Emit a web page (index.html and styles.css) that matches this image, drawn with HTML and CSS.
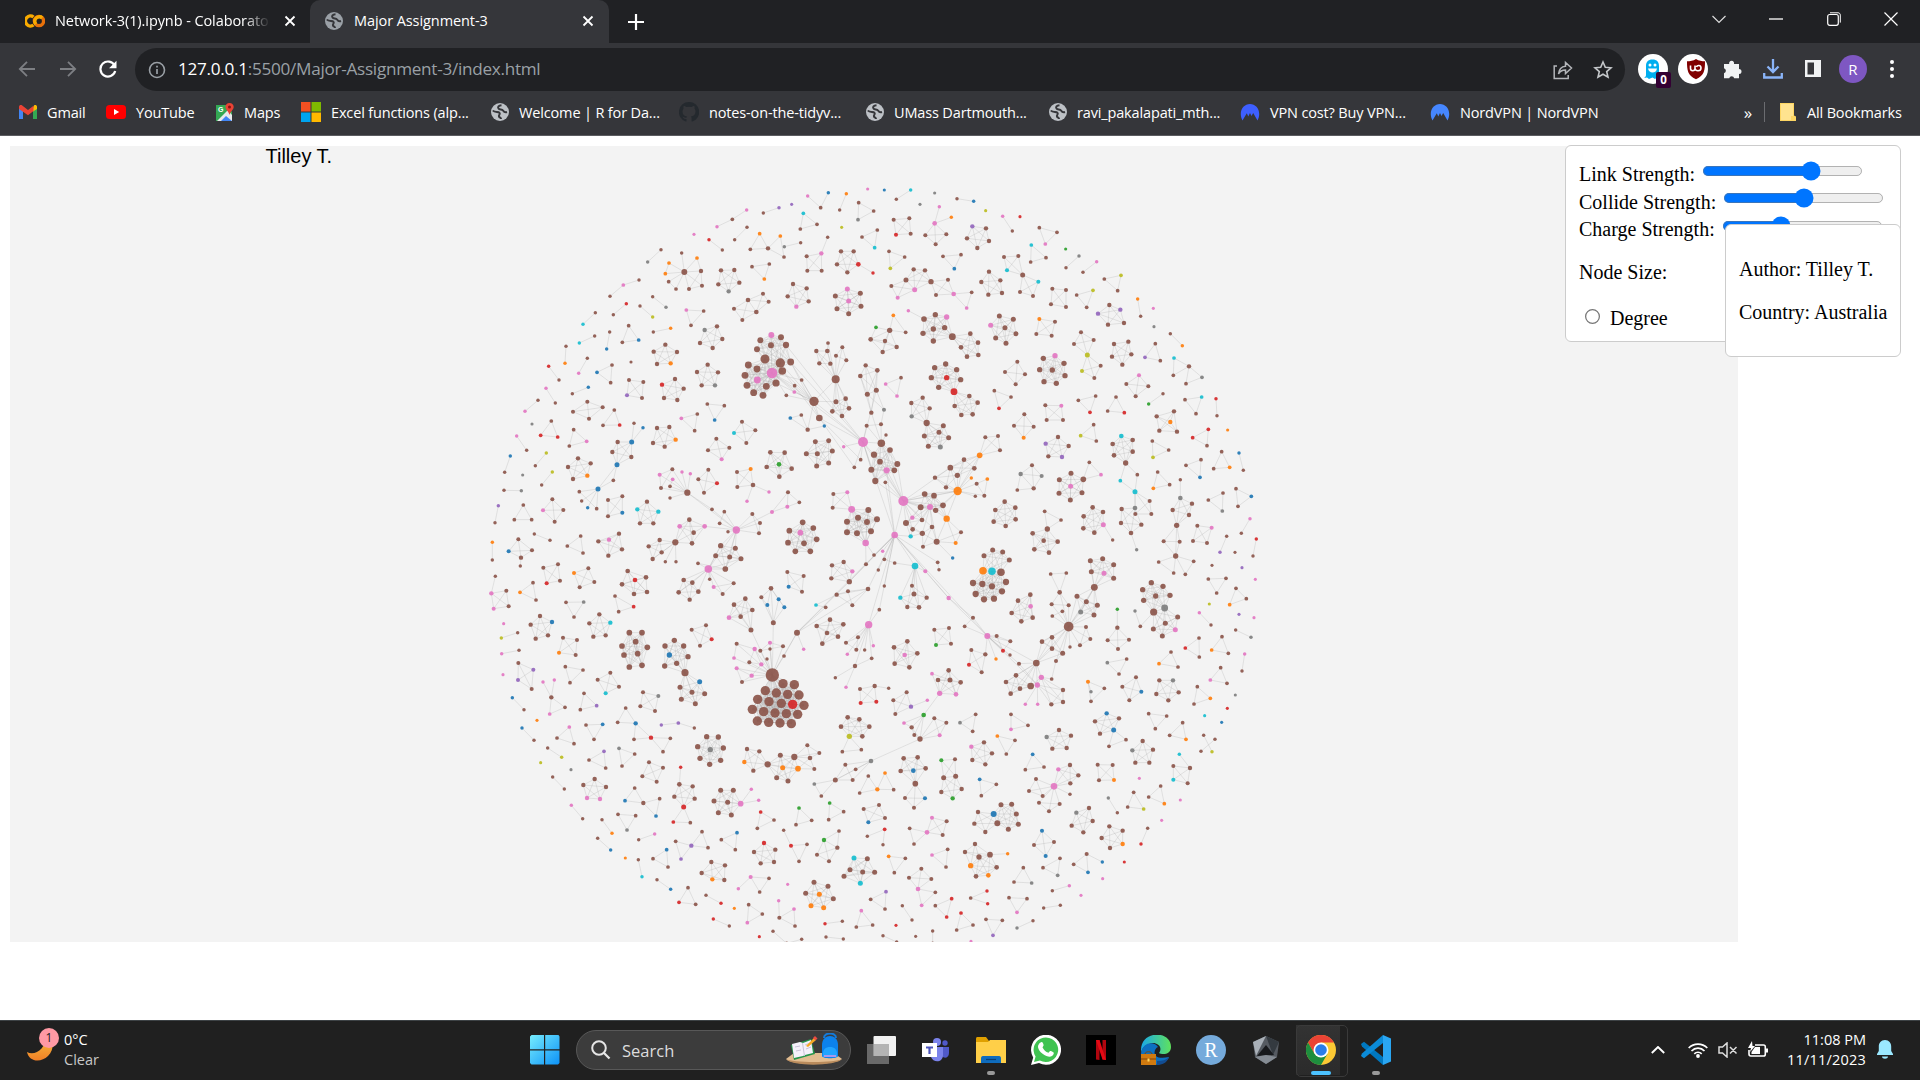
FILE: index.html
```html
<!DOCTYPE html>
<html lang="en">
<head>
<meta charset="utf-8">
<title>Major Assignment-3</title>
<link rel="stylesheet" href="styles.css">
</head>
<body>
<svg class="defs" width="0" height="0">
  <symbol id="globe" viewBox="0 0 18 18"><circle cx="9" cy="9" r="9" fill="currentColor"/><path d="M10.500 2.200C7.500 2.500 6.500 4 7.500 5.500s3.500.5 4.500 2 2.500 2 4 1.500M1.800 7.500c2 2.500 5.500.8 6.700 2.300s-1.200 2.200-.5 3.700 2.200.7 2 2.500" fill="none" stroke="#35363a" stroke-width="2"/></symbol>
  <symbol id="x" viewBox="0 0 12 12"><path d="M1.500 1.500l9 9M10.500 1.500l-9 9" stroke="currentColor" stroke-width="1.800"/></symbol>
  <symbol id="nord" viewBox="0 0 20 18"><path d="M2.500 17.500C-2 9 3 1 10 1s12 8 7.500 16.500L13.200 10l-1.700 3L10 10l-1.700 3.500-1.500-3.200z" fill="currentColor"/></symbol>
</svg>

<header class="browser">
  <div class="tabs">
    <div class="tab back-tab">
      <svg width="20" height="14" viewBox="0 0 20 14"><g fill="none" stroke-width="3.400"><path d="M8.500 3A5 5 0 1 0 8.500 11" stroke="#f9ab00"/><circle cx="14" cy="7" r="4.600" stroke="#e8710a"/><path d="M10.700 10.200A4.600 4.600 0 0 1 17.200 3.800" stroke="#f9ab00"/></g></svg>
      <span class="tab-name fading">Network-3(1).ipynb - Colaborato</span>
      <svg width="12" height="12"><use href="#x"/></svg>
    </div>
    <div class="tab active">
      <svg class="grey" width="18" height="18"><use href="#globe"/></svg>
      <span class="tab-name">Major Assignment-3</span>
      <svg width="12" height="12"><use href="#x"/></svg>
    </div>
    <svg class="plus" width="16" height="16" viewBox="0 0 16 16"><path d="M8 0v16M0 8h16" stroke="#fff" stroke-width="2.200"/></svg>
    <div class="window-buttons">
      <svg width="14" height="16" viewBox="0 0 14 16"><path d="M.5 5L7 11.500 13.500 5" fill="none" stroke="#ddd" stroke-width="1.200"/></svg>
      <svg width="14" height="16" viewBox="0 0 14 16"><path d="M0 8h14" stroke="#fff" stroke-width="1.300"/></svg>
      <svg width="14" height="16" viewBox="0 0 14 16"><rect x=".7" y="3.500" width="10.600" height="10.800" rx="2" fill="none" stroke="#fff" stroke-width="1.200"/><path d="M3 1.800h8c1.500 0 2.300 1 2.300 2.300v7.500" fill="none" stroke="#fff"/></svg>
      <svg width="14" height="16" viewBox="0 0 14 16"><path d="M.5 1.500l13 13M13.500 1.500l-13 13" stroke="#fff" stroke-width="1.200"/></svg>
    </div>
  </div>

  <div class="toolbar">
    <div class="nav">
      <svg width="18" height="16" viewBox="0 0 18 16"><path d="M17 8H2M9 .8L1.800 8 9 15.200" fill="none" stroke="#7d7f83" stroke-width="1.800"/></svg>
      <svg width="18" height="16" viewBox="0 0 18 16"><path d="M1 8h15M9 .8L16.200 8 9 15.200" fill="none" stroke="#7d7f83" stroke-width="1.800"/></svg>
      <svg width="18" height="18" viewBox="0 0 18 18"><path d="M15.600 5.500A7.500 7.500 0 1 0 16.200 11" fill="none" stroke="#fff" stroke-width="2.200"/><path d="M17.500.8v7.400h-7.400z" fill="#fff"/></svg>
    </div>
    <div class="omnibox">
      <svg width="18" height="18" viewBox="0 0 18 18"><circle cx="9" cy="9" r="7.500" fill="none" stroke="#9aa0a6" stroke-width="1.600"/><path d="M9 8v5M9 4.700v1.700" stroke="#9aa0a6" stroke-width="1.700"/></svg>
      <span class="url"><b>127.0.0.1</b>:5500/Major-Assignment-3/index.html</span>
      <svg width="20" height="20" viewBox="0 0 20 20"><path d="M4 6H1.200v12.500h14V15M5.500 14c.5-5 3-7.500 7-7.800V2.500L18.500 8l-6 5.500V10c-3 0-5.500 1-7 4z" fill="none" stroke="#b4b6ba" stroke-width="1.500"/></svg>
      <svg width="20" height="20" viewBox="0 0 20 20"><path d="M10 2l2.300 5.300 5.700.5-4.300 3.800 1.300 5.600-5-3-5 3 1.300-5.600L2 7.800l5.700-.5z" fill="none" stroke="#c4c7ca" stroke-width="1.600"/></svg>
    </div>
    <div class="extensions">
      <span class="ext"><svg width="20" height="22" viewBox="0 0 20 22"><path d="M3 8c0-4 2-6.500 6.500-6.500S16 4 16 8v10l2 2-4-.5-2 1.500-2.500-1.500L6 21l-2-1.500L1 20c1.500-1 2-2 2-3z" fill="#00aef0"/><g fill="#fff"><circle cx="7" cy="7" r="1.500"/><circle cx="12" cy="7" r="1.500"/><path d="M5 10.500h9c-.5 3-2.500 4-4.500 4S5.500 13 5 10.500z"/></g></svg><b class="count">0</b></span>
      <span class="ext"><svg width="20" height="22" viewBox="0 0 20 22"><path d="M10 1c3 2 6 2.200 9 2.200 0 9-.5 14-9 18-8.500-4-9-9-9-18C4 3.200 7 3 10 1z" fill="#800000"/><path d="M4.500 7.500v3c0 3 4.500 3 4.500 0v-3M9 10c0 4 6 3.500 6 0s-4-3-4.500-1" fill="none" stroke="#fff" stroke-width="1.600"/></svg></span>
      <svg width="20" height="20" viewBox="0 0 20 20"><path d="M1 5h5.200a2.500 2.500 0 1 1 4.800 0h5v5a2.500 2.500 0 1 1 0 5v4.200h-4.800a2.600 2.600 0 0 0-5 0H1v-5a2.600 2.600 0 0 0 0-5z" fill="#f1f3f4"/></svg>
      <svg width="20" height="22" viewBox="0 0 20 22"><path d="M10 1v12M4.500 8.500L10 14l5.500-5.500M1.200 15v4.500h17.600V15" fill="none" stroke="#8ab4f8" stroke-width="2.300"/></svg>
      <svg width="20" height="20" viewBox="0 0 20 20"><path d="M2 1h16v17H2z" fill="#f1f3f4"/><path d="M4.500 3.500H11v12H4.500z" fill="#35363a"/></svg>
      <span class="avatar">R</span>
      <svg width="6" height="20" viewBox="0 0 6 20"><g fill="#fff"><circle cx="3" cy="3" r="2"/><circle cx="3" cy="10" r="2"/><circle cx="3" cy="17" r="2"/></g></svg>
    </div>
  </div>

  <nav class="bookmarks">
    <a class="w87"><svg width="18" height="14" viewBox="0 0 18 14"><path d="M0 2v12h4V6z" fill="#4285f4"/><path d="M18 2v12h-4V6z" fill="#34a853"/><path d="M14 2.500v4L18 4V2c0-2-2-2.500-3-1.500z" fill="#fbbc04"/><path d="M0 2c0-2 2-2.500 3.200-1.500L9 5l5.500-4.200V6L9 10.200 0 4z" fill="#ea4335"/></svg><span>Gmail</span></a>
    <a class="w110"><svg width="20" height="14" viewBox="0 0 20 14"><rect width="20" height="14" rx="3.500" fill="#f00"/><path d="M8 4l5.200 3L8 10z" fill="#fff"/></svg><span>YouTube</span></a>
    <a class="w85"><svg width="18" height="18" viewBox="0 0 18 18"><path d="M0 2h11l5 7v9H0z" fill="#34a853"/><path d="M1 18L12 7l4 5v6z" fill="#e8eaed"/><path d="M5 18l5-5 6 5z" fill="#4285f4"/><text x="2" y="8.500" class="tiny">G</text><path d="M13.500 0C11 0 9.300 2 9.500 4c.2 3 3 4 4 8 1-4 4-5 4.200-8 .1-2-1.700-4-4.200-4z" fill="#ea4335"/><circle cx="13.500" cy="4" r="1.500" fill="#811"/></svg><span>Maps</span></a>
    <a class="w190"><svg width="20" height="20" viewBox="0 0 20 20"><path d="M0 0h9.500v9.500H0z" fill="#f25022"/><path d="M10.500 0H20v9.500h-9.500z" fill="#7fba00"/><path d="M0 10.500h9.500V20H0z" fill="#00a4ef"/><path d="M10.500 10.500H20V20h-9.500z" fill="#ffb900"/></svg><span>Excel functions (alp...</span></a>
    <a class="w188"><svg class="light" width="18" height="18"><use href="#globe"/></svg><span>Welcome | R for Da...</span></a>
    <a class="w187"><svg width="20" height="20" viewBox="0 0 20 20"><path d="M10 0a10 10 0 0 0-3.200 19.500c.6.100.7-.2.700-.6v-2c-3 .5-3.500-1.500-4-2.400 1 0 1.500 1.800 4 1.200 0-.6.300-1 .6-1.300-3-.4-4.600-1.800-4.600-5 0-1.200.4-2 1-2.700-.2-.8-.2-1.800.2-2.700 1 0 2 .600 2.700 1.100a9 9 0 0 1 5.200 0c.7-.5 1.700-1.100 2.700-1.100.4.900.4 1.900.2 2.700.6.700 1 1.500 1 2.700 0 3.200-1.600 4.600-4.600 5 .4.400.7 1 .7 2v2.500c0 .4.200.7.700.6A10 10 0 0 0 10 0z" fill="#24292e"/></svg><span>notes-on-the-tidyv...</span></a>
    <a class="w183"><svg class="light" width="18" height="18"><use href="#globe"/></svg><span>UMass Dartmouth...</span></a>
    <a class="w191"><svg class="light" width="18" height="18"><use href="#globe"/></svg><span>ravi_pakalapati_mth...</span></a>
    <a class="w190"><svg class="nord-deep" width="20" height="18"><use href="#nord"/></svg><span>VPN cost? Buy VPN...</span></a>
    <a class="w190"><svg class="nord-blue" width="20" height="18"><use href="#nord"/></svg><span>NordVPN | NordVPN</span></a>
    <span class="more">»</span>
    <span class="all"><svg width="16" height="18" viewBox="0 0 16 18"><path d="M0 0h14v12.500l2 1V18H0z" fill="#fdd663"/><path d="M1 1h12v12h-2v4H1z" fill="#ffe38f"/></svg><span>All Bookmarks</span></span>
  </nav>
</header>

<main class="page">
  <svg id="network" class="network" width="1728" height="796">
    <text class="label" x="255.500" y="16.500">Tilley T.</text>
  </svg>
  <form class="controls">
    <label>Link Strength: <input type="range" min="0" max="100" value="70"></label>
    <label class="raised">Collide Strength: <input type="range" min="0" max="100" value="50"></label>
    <label>Charge Strength: <input type="range" min="0" max="100" value="35"></label>
    <p>Node Size:</p>
    <label class="choice"><input type="radio"> Degree</label>
  </form>
  <aside class="tooltip"><p>Author: Tilley T.</p><p>Country: Australia</p></aside>
</main>

<footer class="taskbar">
  <div class="weather">
    <div class="moon"><svg width="30" height="30" viewBox="0 0 30 30"><defs><linearGradient id="mg" x2="0" y2="1"><stop offset="0" stop-color="#f9c440"/><stop offset="1" stop-color="#f07f26"/></linearGradient></defs><path d="M19 0c9 4 10 14 3 21S3 27 1 17c7 4 20-2 18-17z" fill="url(#mg)"/></svg><b class="badge">1</b></div>
    <div class="temps"><span>0°C</span><span class="dim">Clear</span></div>
  </div>
  <div class="apps">
    <span class="app start"><svg width="30" height="30" viewBox="0 0 30 30"><defs><linearGradient id="wg" x2="1" y2="1"><stop offset="0" stop-color="#76ecfd"/><stop offset="1" stop-color="#0d92f7"/></linearGradient></defs><path d="M1.500 0H14v14.200H0V1.500zM15.200 0h13.300L29.500 1.500v12.700H15.200zM0 15.400h14v14H1.500L0 28zM15.200 15.400h14.300V28l-1.500 1.400H15.200z" fill="url(#wg)"/></svg></span>
    <div class="search">
      <svg width="20" height="20" viewBox="0 0 20 20"><circle cx="8" cy="8" r="6.800" fill="none" stroke="#e6e6e6" stroke-width="2"/><path d="M13 13l5.500 5.500" stroke="#e6e6e6" stroke-width="2.300"/></svg>
      <span>Search</span>
      <svg width="58" height="34" viewBox="0 0 58 34"><path d="M1 26l8-6h40l8 6c-6 6-50 7-56 0z" fill="#e2bd91"/><path d="M1 26c6 4 50 4 56 0-5 7-50 8-56 0z" fill="#b98b5c"/><path d="M6 12l20-6 4 15-21 6z" fill="#26964b"/><path d="M7 11l8-2 3 1 8-3 2 13-8 2-2 1-9 2z" fill="#f5f0fa"/><path d="M17.500 10l2 13M10 14l5-1M11 18l5-1M20 12l5-2M21 16l5-2" stroke="#c9c3d8"/><path d="M21 13l8-8 2 2-8 7z" fill="#f7a823"/><path d="M28 5l2-2 2.500 2.500-2 2z" fill="#eb4b42"/><path d="M39 5c0-6 12-6 12 0" fill="none" stroke="#147bda" stroke-width="2"/><path d="M37 12C37 0 53 0 53 12v11c0 3-16 3-16 0z" fill="#0c82ed"/><path d="M38 24c-1-8 3-10 7-10s8 2 7 10z" fill="#21a4ff"/><path d="M39 22h12v2H39z" fill="#a798ef"/></svg>
    </div>
    <span class="app"><svg width="30" height="28" viewBox="0 0 30 28"><rect x="7.500" width="22.500" height="20" rx="1" fill="#f1f1f1"/><path d="M1 8h22v20H1z" fill="#777" opacity=".85"/><path d="M7.500 8H23v12H7.500z" fill="#b4b4b4"/></svg></span>
    <span class="app"><svg width="27" height="24" viewBox="0 0 27 24"><circle cx="15" cy="4" r="4" fill="#7b83eb"/><circle cx="23" cy="5" r="2.700" fill="#5059c9"/><path d="M20 9h7v6c0 5-5 6-7 3z" fill="#5059c9"/><path d="M8 9h13v8c0 8-10 8-12 2z" fill="#7b83eb"/><path d="M0 5h15v14H0z" fill="#fff"/><path d="M4 8.500h7v2H8.600V16H6.400v-5.500H4z" fill="#4b53bc"/></svg></span>
    <span class="app open"><svg width="30" height="28" viewBox="0 0 30 28"><path d="M0 3c0-2 1-2 2-2h8l3 4h17v10H0z" fill="#e0a000"/><path d="M0 6h12l2-2h16v23H0z" fill="#ffcf48"/><path d="M5 23c0-3 1-3 3-3h14c2 0 3 0 3 3v4H5z" fill="#0f6cbd"/><path d="M10 23.500h10" stroke="#083f75" stroke-width="1.200"/></svg></span>
    <span class="app"><svg width="30" height="30" viewBox="0 0 30 30"><path d="M0 30l2.200-7.500A15 15 0 1 1 8 28z" fill="#fff"/><path d="M3 27l1.600-5.500a12.300 12.300 0 1 1 4.300 4z" fill="#40c351"/><path d="M9.500 7.500c1-1 2-.5 2.500.8.800 2 1 2-.5 4 1.500 3 3 4.500 6 5.500 1.500-2 1.500-2.200 3-1.500 3 1.500 2.500 1.500 2 3-1 2.500-4 3-7 1.700-4.500-1.700-8-5.500-8.500-9 0-2 1-3.500 2.500-4.500z" fill="#fff"/></svg></span>
    <span class="app"><svg width="30" height="30" viewBox="0 0 30 30"><path d="M0 0h30v30H0z" fill="#000"/><path d="M10 5h3.500v20L10 24.500zM16.500 5H20v20l-3.500-.5z" fill="#b1060f"/><path d="M10 5h3.500L20 25l-3.500-.5z" fill="#e50914"/></svg></span>
    <span class="app"><svg width="30" height="30" viewBox="0 0 30 30"><defs><linearGradient id="eg"><stop offset="0" stop-color="#1aa9e8"/><stop offset="1" stop-color="#5fe25d"/></linearGradient></defs><path d="M0 15C0-5 30-5 30 12c0 8-9 8-12 6 5-7-4-12-10-9-4 1-7 4-8 9z" fill="url(#eg)"/><path d="M0 19C1 6 14 6 17 12c-5 2-7 14 11 10-3 10-28 12-28-3z" fill="#0d70c0"/><path d="M16 26c5 0 9-1 12-4-2 6-7 8-12 8z" fill="#134c91"/><path d="M0 19h15v11H0z" fill="#d07a10"/><path d="M4 19c0-3 7-3 7 0M0 24h15" stroke="#80450a" fill="none"/><path d="M6.500 23.500h2v3h-2z" fill="#ffd75c"/></svg></span>
    <span class="app"><svg width="30" height="30" viewBox="0 0 30 30"><circle cx="15" cy="15" r="15" fill="#75aadb"/><text class="serif-r" x="15" y="21.500">R</text></svg></span>
    <span class="app"><svg width="26" height="28" viewBox="0 0 26 28"><path d="M0 6l13-6 13 6-2 15-11 7-11-7z" fill="#565b62"/><path d="M13 0L0 6l3 14z" fill="#a9b0b8"/><path d="M13 0l13 6-6 13z" fill="#343a40"/><path d="M13 9l8 10-17 1z" fill="#17191c"/><path d="M2 21l11 7 11-7-11-2z" fill="#858c94"/></svg></span>
    <span class="app open current"><svg width="30" height="30" viewBox="0 0 30 30"><circle cx="15" cy="15" r="15" fill="#fcc934"/><path d="M2 7.500A15 15 0 0 1 28 7.500H15L8.500 18.700z" fill="#ea4335"/><path d="M2 7.500A15 15 0 0 0 15 30l6.500-11.200H8.500z" fill="#1e8e3e"/><circle cx="15" cy="15" r="7.500" fill="#fff"/><circle cx="15" cy="15" r="5.800" fill="#2b7de9"/></svg></span>
    <span class="app open"><svg width="30" height="30" viewBox="0 0 30 30"><path d="M0 9l3-2.200L22 22v8L1 11.500z" fill="#0078c0"/><path d="M0 21l3 2.200L22 8V0L1 18.500z" fill="#0b8bd8"/><path d="M22 0l8 3.500v23L22 30z" fill="#2aa6f2"/></svg></span>
  </div>
  <div class="tray">
    <svg class="up" width="14" height="8" viewBox="0 0 14 8"><path d="M.8 7L7 1l6.200 6" fill="none" stroke="#fff" stroke-width="1.900"/></svg>
    <svg class="wifi" width="20" height="16" viewBox="0 0 20 16"><g fill="none" stroke="#fff" stroke-width="1.700"><path d="M.7 6a13 13 0 0 1 18.600 0M3.500 9a9 9 0 0 1 13 0M6.300 11.800a5.200 5.200 0 0 1 7.400 0"/></g><circle cx="10" cy="14" r="1.900" fill="#fff"/></svg>
    <svg class="sound" width="20" height="16" viewBox="0 0 20 16"><path d="M1 5v6h3.500L9 15V1L4.500 5zM12 5l6.500 6.500M18.500 5L12 11.500" fill="none" stroke="#ddd" stroke-width="1.500"/></svg>
    <svg class="battery" width="20" height="18" viewBox="0 0 20 18"><path d="M7 4h8.500c1 0 1.800.8 1.800 1.800v7.400c0 1-.8 1.800-1.800 1.800H2.800C1.800 15 1 14 1 13V9" fill="none" stroke="#fff" stroke-width="1.600"/><path d="M7 6h5v7H3.500v-2zM18 7.500h2v4h-2zM4 0L0 7h3l-1 4 5-6H4.500z" fill="#fff"/></svg>
    <div class="clock"><span>11:08 PM</span><span class="date">11/11/2023</span></div>
    <svg width="16" height="20" viewBox="0 0 16 20"><path d="M8 0C4 0 1.800 3 1.800 6.500V11L0 14v1h16v-1l-1.800-3V6.500C14.200 3 12 0 8 0zM5 16.500c0 3 6 3 6 0z" fill="#9be8ff"/></svg>
  </div>
</footer>
<script src="graph.js"></script>
</body>
</html>
```
FILE: styles.css
```css
* { box-sizing: border-box; }
body { margin: 0; width: 1920px; height: 1080px; overflow: hidden; display: flex; flex-direction: column; background: #fff; }
.defs { position: absolute; }
svg { flex: none; display: block; }
.browser, .taskbar { font-family: "Open Sans", "Noto Sans", sans-serif; color: #fff; }

.browser { height: 136px; background: #35363a; border-bottom: 1px solid #5b5c60; flex: none; }
.tabs { height: 43px; display: flex; align-items: center; background: #202124; }
.tab { display: flex; align-items: center; height: 43px; font-size: 14.500px; letter-spacing: -.08px; white-space: nowrap; }
.back-tab { width: 310px; padding: 0 14px 2px 25px; border-bottom-right-radius: 10px; }
.active { width: 299px; padding: 0 15px 2px; background: #35363a; border-radius: 10px 10px 0 0; }
.tab-name { flex: 1; margin-left: 10px; overflow: hidden; }
.active .tab-name { margin-left: 11px; }
.fading { margin-right: 14px; -webkit-mask-image: linear-gradient(90deg, #000 88%, transparent); mask-image: linear-gradient(90deg, #000 88%, transparent); }
.grey { color: #9aa0a6; }
.light { color: #bdc1c6; }
.plus { margin-left: 19px; }
.window-buttons { display: flex; gap: 43.500px; margin-left: auto; padding: 0 22px 6px 0; }

.toolbar { display: flex; align-items: center; height: 53px; }
.nav { display: flex; gap: 22.500px; align-items: center; width: 135px; padding: 0 0 2px 18px; flex: none; }
.omnibox { display: flex; align-items: center; width: 1490px; height: 43px; background: #202124; border-radius: 22px; padding: 0 12px 0 13px; flex: none; }
.url { flex: 1; margin-left: 12px; padding-bottom: 2px; font-size: 17.150px; color: #9aa0a6; letter-spacing: -.28px; }
.url b { font-weight: 400; color: #fff; }
.omnibox svg + svg { margin-left: 20px; }
.extensions { display: flex; align-items: center; gap: 20px; padding: 0 0 2px 13px; }
.ext { position: relative; display: flex; align-items: center; justify-content: center; width: 30px; height: 30px; background: #fff; border-radius: 50%; }
.ext + .ext { margin-left: -10px; margin-right: -5px; }
.count { position: absolute; left: 18px; top: 18px; width: 15px; height: 16px; background: #330033; border-radius: 2px; font-size: 11.500px; line-height: 16px; text-align: center; }
.avatar { width: 28px; height: 28px; border-radius: 50%; background: #7e57c2; text-align: center; font-size: 15px; line-height: 28px; margin: 0 -4px; }
.extensions svg:last-child { margin-left: 6px; }

.bookmarks { display: flex; align-items: center; height: 34px; padding: 0 0 2px 19px; font-size: 14.500px; letter-spacing: -.15px; white-space: nowrap; }
.bookmarks a { display: flex; align-items: center; gap: 10px; flex: none; }
.w85 { width: 85px; } .w87 { width: 87px; } .w110 { width: 110px; } .w183 { width: 183px; } .w187 { width: 187px; }
.w188 { width: 188px; } .w190 { width: 190px; } .w191 { width: 191px; }
.nord-deep { color: #3e5fff; }
.nord-blue { color: #4687ff; }
.tiny { font: 700 7px "Liberation Sans", sans-serif; fill: #fff; }
.more { margin-left: auto; font-size: 17px; }
.all { display: flex; align-items: center; gap: 11px; width: 156px; height: 20px; margin-left: 12px; padding-left: 15px; border-left: 1px solid #6b6c70; }

.page { position: relative; height: 884px; padding: 10px; flex: none; font: 20px "Liberation Serif", serif; color: #000; }
.network { background: #f3f3f3; overflow: hidden; }
.label { font: 20px "Liberation Sans", sans-serif; }
.links { stroke: #aaa; stroke-opacity: .27; stroke-width: 3; }
.nodes { fill-opacity: .92; }
.controls { position: absolute; left: 1565px; top: 9px; width: 336px; height: 197px; padding: 15px 13px; background: #fff; border: 1px solid #ccc; border-radius: 6px; }
.controls label { display: flex; align-items: flex-start; gap: 4.500px; height: 27.500px; line-height: 27px; white-space: nowrap; }
.controls input[type=range] { zoom: 1.25; width: 129px; height: 16px; margin: 0 2px; }
.controls .raised input[type=range] { margin-top: -.8px; }
.controls p { margin: 17px 0 20px; line-height: 23px; }
.controls .choice { gap: 10px; padding-left: 6px; line-height: 28px; }
.choice input { zoom: 1.25; width: 12px; height: 12px; margin: 4px 0 0; }
.tooltip { position: absolute; left: 1725px; top: 88px; width: 176px; height: 133px; padding: 13px; background: #fff; border: 1px solid #ccc; border-radius: 6px; white-space: nowrap; }
.tooltip p { margin: 20px 0; line-height: 23px; }

.taskbar { display: flex; height: 60px; flex: none; background: #202020; border-top: 1px solid #3d4245; }
.weather { display: flex; gap: 10px; width: 516px; padding-left: 26px; }
.moon { position: relative; width: 28px; padding-top: 14px; }
.badge { position: absolute; left: 13px; top: 7px; width: 20px; height: 20px; border-radius: 50%; background: #ff99a4; color: #222; font-size: 12px; font-weight: 400; line-height: 20px; text-align: center; }
.temps { display: flex; flex-direction: column; padding-top: 9px; font-size: 14.500px; line-height: 20px; }
.dim { color: #c8c8c8; }
.apps { display: flex; align-items: center; padding-bottom: 1px; }
.app { position: relative; display: flex; align-items: center; justify-content: center; width: 55px; height: 50px; }
.start { width: 56px; padding-left: 1px; }
.open::after { content: ""; position: absolute; bottom: 0; width: 8px; height: 4px; border-radius: 2px; background: #999; }
.current { background: linear-gradient(#333, #2b2b2b) 3px 0 / 44px 50px no-repeat; border: 0; }
.current::before { content: ""; position: absolute; left: 3px; top: 0; width: 50px; height: 50px; border: 1px solid #3a3a3a; border-radius: 5px; }
.current::after { width: 20px; background: #4cc2ff; }
.search { display: flex; align-items: center; width: 275px; height: 40px; margin: 0 2px 0 4px; padding: 0 7px 0 14px; border: 1px solid #585858; border-radius: 20px; background: #3c3c3c; font-size: 16.500px; color: #ddd; }
.search span { flex: 1; margin-left: 11px; }
.tray { display: flex; align-items: center; margin-left: auto; padding: 0 27px 1px 0; }
.up { margin-right: 23px; }
.wifi, .sound { margin-right: 10px; }
.clock { display: flex; flex-direction: column; width: 98px; margin-right: 11px; text-align: right; font-size: 14.500px; line-height: 20px; }
.date { letter-spacing: .2px; }
.serif-r { font: 20px "Liberation Serif", serif; fill: #fff; text-anchor: middle; }
```
FILE: graph.js
```javascript
// Each group is a fully linked team of co-authors; a leading * links only its first author to the rest.
// An author is "x,y" plus a country letter; no letter means the most common country.
const colors = { '': '#8c564b', p: '#e377c2', o: '#ff7f0e', u: '#1f77b4', c: '#17becf', g: '#7f7f7f', y: '#bcbd22', r: '#d62728', v: '#9467bd', n: '#2ca02c' };

const northWest = `1163,27p;983,48p 1022,83;1022,83 1045,38u;1099,41o 1079,90;1136,68 1181,93 1134,119g;935,73v;897,83v 850,99;970,100c 1011,133 961,147;800,90p 757,118;757,118 711,140p;1085,142y;801,142 764,179;642,163p;687,179r 727,210;1192,150 1146,171 1184,203c;839,161o 811,208 864,205;864,205 901,168o 912,231;913,200g 962,188;1043,172 1024,220p;1024,220p 980,229 982,272 1025,272;1083,214 1121,214 1135,253r 1102,277 1071,253;1135,253r 1179,279r;543,209 503,246g
*613,276 605,219 651,234o 567,249o 556,281o 566,305 588,327 627,327 666,317 663,273;627,327 666,317 663,273;566,305 588,327;567,249o 556,281o;651,234o 663,273;723,271 763,270 778,308 746,334g 715,313;816,260 868,252 853,297o;939,312 980,325 986,364 949,380p 923,349;1102,327p 1141,340 1143,379 1106,401 1071,386 1066,348 1106,363p;430,315p 477,300;430,315p 390,349;518,350 558,382g;480,378 518,411y;439,371r 400,404;346,398 309,433c;619,390p 671,393 633,436;849,341 866,365 829,396 804,360;804,360 829,396 787,420 762,386;711,439 727,477 698,504 660,489 674,450g;572,445o 520,456;446,437 427,487 476,480u;389,456 380,507u;344,468 298,489c;258,499 255,550o;556,494 591,516 572,550o 531,552 521,515;322,535 296,580p;453,546;206,559r 237,600;396,555 351,577u 392,608;325,622u 277,641;447,600 490,606 486,654 441,646v;585,597 611,626 592,660 552,654 546,614r;683,554 714,577 705,616g 665,616 651,576;198,625p 226,669;174,661 135,694p;322,665 368,682 327,716 279,695;403,690 369,736 419,735r;682,672 733,677 704,720u;604,715p 652,702 644,752;156,732g;214,723 182,766r 233,771r;281,749 268,798 320,784p;110,768p 140,811;199,819y 166,857;91,828u 74,877;462,730 455,786u;489,743u 455,786u;455,786u 413,786 397,816 411,854u 454,831;531,744 568,741 587,779o 554,800 519,789;786,725 826,751 799,789 762,759c;709,776 748,803 725,838p 684,811;294,835 332,850 322,887o 279,897 264,861;411,854u 400,901;400,901 354,927u;411,854u 354,927u;*354,927u 298,935 305,963 323,983u 350,986;298,935 350,986;128,885g;217,876y 185,915;72,931 124,932g;217,958 250,990 224,1025 189,991p;55,977v 45,1028;130,975 103,1019 155,1019;384,960 427,949 427,998u 384,1009;501,965 535,995c 520,1030 480,1030 472,988c;685,869 711,910r 672,938 655,898;771,876 812,867o 819,915 772,921;*819,915 867,936p 801,964p;871,817 914,818 935,866 898,890 860,861 897,853n
*622,938 539,884p 577,868 578,898p 606,876p 631,881p 570,919 543,924 570,954 696,988 769,1050p;539,884p 577,868 543,924;578,898p 570,919;*769,1050p 696,988 733,995 719,1030 744,1055 817,1002 840,1029 837,1060 876,996p;817,1002 840,1029 837,1060;876,996p 922,980p;922,980p 924,937 958,967;876,996p 924,937;733,995 719,1030;599,1039p 628,1019 641,1058 636,1090 586,1087;674,1039p 628,1019 641,1058 636,1090;599,1039p 674,1039p;674,1039p 769,1050p;163,1062 210,1081;302,1068 262,1098 309,1119;37,1087o 37,1140;115,1078 156,1111 123,1133 86,1114u;121,1158 123,1133;355,1084 417,1061 426,1108 385,1127 387,1079p;586,1087 539,1080 506,1099 545,1117 518,1137;*586,1087 556,1145 588,1145;968,1027 1000,1044 1010,1078 991,1114 946,1114 924,1088 928,1052 961,1058p 972,1090;*769,1050p 722,1097 766,1105 749,1131;722,1097 766,1105 783,1136 749,1131 707,1127 736,1167
874,465p 903,472 918,495 873,496 841,481 831,508 855,537 876,579p 901,549 932,546;855,537 805,555 831,567 795,586 832,600p 801,616 821,638 849,646 859,619 888,609 907,573 876,579p 901,549;*1002,664 932,546 965,600 944,617 943,636p 919,646 876,579p 901,549 907,573 888,609 1067,598 1068,665 1018,714 1149,786p 983,749;*876,579p 965,600 919,646 943,636p 944,617;*1067,598 1044,489 1009,513 1042,513 1068,527 1087,502 1099,541 1051,551 1018,550;1009,513 1042,513 1051,551 1018,550;1044,489 1042,513;1068,527 1087,502 1099,541;*1067,598 1068,665 1097,656 1107,685 1086,708 1057,694;1068,665 1097,656 1107,685 1086,708 1057,694;931,714u 964,705 983,749;983,749 1033,738u;*1018,714 1149,786p 1142,839 907,573 932,546 1123,862;1006,785 1046,782 1057,813 1046,849 1010,858 979,821 1012,821
*1149,786p 932,546 1091,800p 1123,862 1142,839 1174,869 1182,824 1160,737 1186,903 918,495 876,579p 1204,790 1189,631;1157,556 1192,571 1141,588 1189,631 1162,643;*1174,698 1162,643 1192,571 1141,588 1204,790;1182,824 1200,845 1174,869 1186,903 1220,871p 1243,871 1252,852 1230,810 1204,790;1160,737 1203,733 1204,790;1212,689g 1203,733;1218,765 1204,790;*1212,689g 1162,643 1189,631;1188,442n 1172,478 1229,451;1229,451 1215,483 1250,501 1208,516 1172,478;1102,937p 1060,942 1058,983 1115,988p;1115,988p 1165,990 1134,1013 1101,1025 1161,1026 1191,1018 1101,1057 1131,1060 1173,1054 1157,1089p;*1157,1089p 1182,1125 1158,1153`;

const northEast = `13,30u;49,58 92,30c;164,39g;120,73g;178,80p 164,130p;164,130p 214,112o;231,56 281,64u;317,92y;368,109p 397,153;420,110r;41,119 88,115 92,161 48,164r;164,130p 199,163 167,193 136,166;277,139v 318,145 327,183 292,204 261,175;478,143 531,157 496,192p;454,195c 498,233 452,246;557,207n;597,228g 558,263;650,245p 609,277;27,214 74,231 31,265y;189,229 243,224 223,266u;372,231 415,228 428,285 381,271c;428,285 475,305c 459,348 420,336;101,268 135,271 153,305 104,329p 78,300;34,318 78,300 104,329p 53,353p;204,299 221,342p 168,345 153,305;221,342p 275,337 260,384p;327,275 361,301 366,339 325,344 304,306;517,326 558,330 558,381 513,373;639,331y 590,345 620,382;723,286y 673,297 713,332;773,357o 782,409;820,385p;822,440g;871,461 907,497o;85,392p 132,417;132,417 166,404 200,411p 194,443 160,447 129,460 160,483 217,470;217,470 271,461 294,488 295,525 261,530 243,502;358,408 400,418 408,461 378,490 347,474 332,436p 375,443;478,417o 525,425 515,467 469,462;688,375 721,389v 732,429 684,434 654,401v;603,457 641,480 622,525y 582,492;622,525y 662,557 643,594 606,573y;702,492 745,485 754,523 727,554 696,530;826,491 795,532v 841,542;882,534c 927,559 880,586;927,559 966,592g 918,611;40,406o 77,457 29,451
197,552 230,569 242,599 200,593r 222,635r 176,622 154,593 164,563;222,635r 268,648 293,668 278,703 244,705 224,678;412,545 435,583 407,613 375,576;490,535 525,527p 552,550 555,587 529,610 492,605 479,569 517,570;777,586p 805,619 767,649 739,612;849,641 806,672n;63,593 17,612p 51,648p;343,632 393,651 357,685r;595,661 647,648 630,697r;708,651 683,693 733,698r;496,676 544,677p 549,720 500,720;915,659 965,651c 948,701;1008,656r 1011,707;882,694 891,755 838,752 830,709 871,726o;128,653 149,685 140,729 95,709g 94,669;140,729 190,737 206,773 181,801g 145,799 133,768 177,757;433,703 461,740 431,773o 402,737;641,734 602,767y 649,783;534,771 566,798 546,831v 505,829 497,791v;724,768c 758,780 758,815 737,849 702,826 698,792;817,783 866,810 819,832y;985,748r 938,773r 981,797;1043,750o;1077,819u 1090,871;963,839 918,856 960,892u;1025,815 1001,866 1049,862o;354,768 316,772 299,826o 360,811;299,826o 252,839 211,863 232,886 283,865
*233,933o 299,826o 283,865 252,839 232,886 211,863 165,893 198,922 274,894o 290,911 286,949 313,947 162,947 134,942 189,976 167,991;211,863 165,893 198,922 232,886;322,897o 290,911 313,947;456,856 422,882g;422,882g 485,888g 461,925;422,882g 412,930;456,856 485,888g;412,930 461,925;456,856 461,925;628,847 663,884p 610,898;573,880 610,898 606,938 571,960 537,940 538,899 572,919p;737,849 721,902c;737,849 772,884;*765,935c 721,902c 772,884;765,935c 809,963 814,1002 766,1002;833,876 869,914 820,925o;901,899 901,954g;901,954g 936,971 927,1005 890,1036 878,990;890,1036 851,1084 899,1085 887,1128;725,987 784,1034 753,1059 723,1029 765,984g;765,984g 765,935c;753,1059 770,1109g;1029,939 985,960 1027,993g;1068,926 1114,949u 1074,979;1110,1016p 1084,1060;1129,1077r 1119,1128;1040,1069 1020,1117v;952,1037 995,1043p 981,1089 939,1083;374,965 406,983 407,1018 377,1038 341,1025 346,990;494,994 543,1020 502,1047;502,1047 533,1085 507,1118 463,1108 458,1060 491,1082;638,982 669,996 670,1034p 643,1058 610,1045 611,1009;670,1034p 698,1080
*70,963p 134,942 162,947 150,981p 167,991 122,982 97,1013p 78,1029 126,1020 189,976 156,1041 98,1048 233,933o 52,852 20,871p 4,790 -51,786p 16,907 44,1065p -14,903 -18,824 211,863;134,942 162,947 189,976 167,991 150,981p 122,982;*150,981p 78,1029 126,1020 98,1048 127,1060 156,1041 170,1085;*200,1016o 233,933o 243,1057 227,1089o 170,1085 189,976 150,981p 162,947 134,942;243,1057 227,1089o 170,1085;78,1029 92,1069c 98,1048 127,1060;78,1029 97,1013p 126,1020 122,982;170,1085 129,1100 127,1060 156,1041;*44,1065p -51,786p 16,907 20,871p 8,1114p -18,1125 13,1138 92,1069c;218,1134u 170,1085`;

const southWest = `46,49 34,100p;34,100p 79,92 86,139 41,146p;190,23 234,13 240,62 200,70r;282,39o 325,25 343,66 299,82;159,68 120,97o 168,120;443,33 498,52 501,96 462,102 426,73 465,60r;405,108 461,140r 416,155;258,127 311,126g 282,171;71,191p;64,234y 113,218;65,281p 117,271;69,344p;180,168 216,186u 204,226 167,236 152,194;358,163 391,188c 377,226 340,230 328,190;249,233 291,240 287,285 237,278o;448,218 486,218 502,262 486,316 448,321 432,285 426,258 467,245 473,281;115,309 160,329v 155,387 114,360v;256,320 309,330 270,368;189,366p 214,412;214,412 223,360p;214,412 255,442 209,462p;391,338 417,380 377,400c 353,359;312,400 350,437v 301,449;489,397 535,408g 525,453 481,439;97,413u 132,449;171,481o;126,504u 162,541;268,501p 231,534 282,551;318,495 368,493u 342,538;437,444 413,487 467,490u;467,490u 462,538 513,533r;513,533r 571,535 549,575;544,495v 595,489v;595,489v 643,504;203,564 245,592y;182,608y;273,629g;218,651 253,687;372,574v 327,600 377,624;417,565g 464,582 426,618;507,607 549,623 530,665 487,649;344,657 378,681 360,717p 321,714p 310,675;274,736p 308,776;464,684 435,722u 490,729;490,729 539,716 528,768u;414,763 467,767 441,810g;366,779 396,820o;353,835 392,870u;436,894o;475,899 486,950c;476,839 524,822p
602,622r 598,673;598,673 638,679 644,716 611,741r 583,710;611,741r 580,786r 631,788;587,844 634,857v 603,897v;634,857v 666,815 684,863;519,896 560,869u 564,921;531,959 572,988u;624,983 597,1027r 647,1033;694,906 735,916 733,960 697,958o 665,939;678,1006 723,1030r;763,1045o;700,1077r 748,1098;838,1130r;724,839 771,818u 766,869;842,756r 882,780 832,805;852,849r 886,869 882,906 842,910 822,876;911,811 933,857r;933,857r 981,853 957,904;957,744n 995,781 948,794;1049,729n 1091,755 1046,779;1077,813 1032,840n 1072,863;1032,840n 1072,863 1047,904 1011,884;1122,894c 1162,896 1184,937 1141,970c 1092,949 1110,929 1148,936;812,951p 775,986p;812,951p 867,955 839,996;923,973p;896,1022p 898,1073;898,1073 942,1047p 945,1098;806,1034 847,1062 802,1088p;1002,967 1044,979 1060,1016 1031,1043o 993,1037o 977,1000 1018,1003o;1035,1091r 1087,1084;1144,1052p 1129,1101 1178,1095;1038,1131 1090,1137;879,1114 920,1150;965,1138 920,1150;1172,1018 1218,995v 1215,1047;680,530 715,531 730,564 722,601 689,613 660,595 653,560 691,569g;722,691 760,691 782,731p 754,765 715,758 702,723 743,727;782,731p 814,688p;782,731p 836,721p;801,567 838,574 863,613 820,632 793,606o;863,613 901,586 943,591 954,626o 924,663 890,653 908,623o;943,591 982,556 1018,579 990,594;943,591 954,626o 1003,627 990,594;635,209 678,196 695,238r 660,257;555,258 583,241 611,258 624,290 590,310 554,318 568,285u 615,338;615,338 600,382 604,418 646,431 674,401 636,397 659,365u
762,134 796,116 817,150 782,170 747,173p 813,210;813,210 877,345;873,85 844,112 862,135u 880,188;880,188 873,85 896,118u 913,142u;880,188 877,345;951,218 877,345;*877,345 770,251 824,267p 762,294p 808,307 844,313p 770,325p 815,347p 786,366 841,272 870,248p 870,267 909,259 912,288 861,297;770,251 762,294p;770,251 824,267p;824,267p 844,313p 808,307;770,325p 815,347p 786,366;844,313p 815,347p;870,248p 909,259 841,272;877,345 909,371 943,374 856,392 889,399 923,403 957,405 833,418 867,425 904,430 938,433r 972,436 817,448 851,455 885,459 919,461 953,463 832,483 866,487 900,489 934,491;971,268p 951,218;*951,218 1037,142 1164,87 1108,65 912,288 1244,-75p;1056,16 1091,6 1117,34p 1108,65 1054,55;1158,13 1108,65;1070,104 1104,94 1117,136 1164,87;1008,135c 1037,142;1008,135c 1070,104;*1244,-75p 1108,65 1164,87 1158,13 1195,30 1198,149;922,36 971,48 966,95 926,80u;1010,198 1050,179 1090,193 1074,230 1027,251 1041,219
*1166,194p 1134,232 1098,248 1102,283p 1129,269 1154,270 1180,257p 1175,295 1125,318 1244,-75p 1198,149;1134,232 1098,248 1129,269;1125,318 1066,353;1125,318 1098,382p;1125,318 1175,295;1140,387 1184,378 1189,425r 1142,429r;1103,472 1138,478 1168,500 1147,529 1108,529y 1083,500;1108,529y 1144,569 1087,575;1173,603g 1096,614 1066,660;1173,603g 1127,628 1066,660;1096,614 1118,660;1066,660 1118,660;1118,660 1173,603g;1066,660 1024,708;1003,672g 1024,708;1066,660 1003,672g;1173,603g 1320,537;1165,648 1139,699 1192,688o;1151,747 1197,735 1165,787u 1215,774;1162,829 1214,808r;1214,808r 1209,854;*685,27p 654,10 611,60 689,58 701,81p 761,70 728,102 637,68 655,95 769,-90p 783,-4 736,27;611,60 637,68 655,95 629,119 596,97;*736,27 769,-90p 654,10;701,81p 728,102 761,70;*685,27p 596,97 707,-13 722,-43`;

const southEast = `44,9 13,-2;173,7 177,29;*44,-75p 105,18c 13,78 136,34p 206,114p 322,228p 173,7;*105,18c 96,77 102,102 140,113 117,142 82,141 61,113c 136,34p 44,9;96,77 102,102 140,113;102,102 117,142 82,141 61,113c;140,113 117,142;*206,114p 322,228p 279,173 136,34p;279,173 254,199 322,228p;*322,228p 350,228 391,244 369,272r 390,285 348,297o 417,311 316,283;350,228 391,244 369,272r;274,270 316,283 305,337 267,314r;309,32o 336,34c 363,37 378,66 366,94 342,116 312,118 287,102 279,69 307,72 336,79;309,32o 336,34c 363,37 338,-30 368,-24 388,0 312,-13;414,122 451,104 452,139p 458,173 424,184 395,159;512,42 559,39 539,97;539,97 515,133 566,136;517,168 547,154
*566,200 515,133 539,97 566,136 547,154 517,168 602,156g 591,109 619,125 652,136 642,165 618,201 631,237 600,256 570,261 516,232 486,245 516,266 548,280 469,309 643,82 528,303;591,109 619,125 652,136 642,165 602,156g 643,82;643,82 701,55 701,14 672,40p 634,35 631,2 668,-4;618,201 631,237 600,256;486,245 516,232 516,266 548,280 469,309;528,303 548,280;528,303 515,357;*469,309 408,346 378,366 420,386 392,401 452,378 484,352p 472,375p 322,228p 417,311;408,346 378,366 392,401 420,386 452,378;*472,375p 436,433p 473,433p 549,390 549,426 514,433 417,311 452,378 322,228p;*484,352p 549,390 549,426 514,433 515,357 452,378 472,375p;549,390 549,426 514,433;163,209 207,204 213,251 168,255n;82,244 112,280 88,322 44,311 42,262 74,285p;206,331 242,367 228,403p 179,400p 174,360 210,360;156,341p 179,400p;156,341p 210,360;179,400p 131,465n;142,421p 93,440v;93,440v 80,397 40,421 46,462;26,385 -16,378;131,465n 72,489p 95,502;131,465n 103,525;131,465n 120,537;95,502 103,525 120,537;120,537 163,475 199,488 179,526p;287,463 240,488g 278,514;393,463 444,496 393,508p;624,365o 673,385 633,424;624,365o 633,395g;740,297 682,308g 717,342;768,352 784,395u 748,421 727,380;712,148n 712,203;712,203 747,239 714,267 683,241;765,153g 781,199;781,199 821,156;814,68 849,79 870,106 827,108 791,121 788,89 821,156 854,144g;821,156 854,144g 893,171 886,209p 847,228 820,207 856,190
836,6 887,-12 881,39;887,-12 941,4 916,43;996,16;1065,-23;1086,23v;1126,58p;985,57 1038,55 1010,99;1068,85 1049,134o 1099,116;988,132y;1077,163v;1122,173p;958,158p 993,195;1067,210 1113,232g;957,234 916,264r 958,291;1026,230 995,270o 1045,280;1094,282p 1086,333;873,276 837,311o 894,321;1022,323 991,360p 1041,370;838,361 879,361g 896,397 865,421 829,402;952,380 991,415o 942,432;1066,405g;1042,445r;1025,487u;974,467c;806,461 860,468 826,506;908,488 869,526 918,538o;971,526 996,575y;1005,538 963,574;680,460u 717,475 701,510u 660,521 645,484;701,510u 738,539 687,559;537,510 573,527 560,564 517,566 500,531g;352,528o 405,541 379,582;312,547 336,580 316,613 277,600 274,560p;458,583u 492,621 436,629;788,543 819,569 808,608 766,608 757,571g;898,583c 930,624;880,618 930,624 923,670 880,659c;778,655p;901,720p;842,678 806,711 853,731o;761,697 743,741 791,747y;685,714g 712,758;845,781p;803,805 783,852r;733,906r;668,956p;568,977p 517,992;603,1006p;491,1044 541,1036;653,614 698,615 702,660o 657,661
*522,679p 535,628p 570,615 595,646 571,670 570,703 539,732 507,754 477,728 488,708 447,693 468,657;535,628p 570,615 595,646 571,670;468,657 447,693 488,708;477,728 507,754 539,732;299,658u 349,673 304,707;71,595 113,592 137,625 106,671 62,633 100,632u;106,671 75,714 135,715u 102,743;15,639o 41,689 -8,688o;184,601n 225,598 227,649 191,653;191,653 227,649 245,687 218,715n 184,696;294,756 341,762u 352,790 316,816 283,791;341,762u 363,734 395,733 409,762 415,793 385,808 352,790;589,758g 627,744 638,783 610,817 575,797;688,799 728,812 728,852o 690,864 665,834;486,812u 522,846 497,888u 462,855;156,773p 200,784 188,825 141,817p;141,817p 89,805 102,852;156,885p 203,868 198,921;26,889o 76,895 43,938;285,852 330,884 297,891 255,876 272,917o;330,884 383,881o;330,884 350,922 325,946o 288,949 272,917o 297,891;430,923 402,966 455,969g;540,895 489,923 533,946g;620,882 581,913 624,937u;620,882 667,906u;124,926 154,957 114,987p 87,953;114,987p 166,997 125,1036p;321,993r 272,1014;272,1014 323,1031r;387,1013 441,1016 411,1057p;215,1016r 166,1037 200,1071r;243,1059r 230,1110 279,1095;67,1037 96,1080;48,1096r;318,1078 367,1081 339,1126v;459,1082 411,1104g;9,1127 50,1146;107,1129;158,1113 158,1150;273,1144p`;

const fixedRadii = { '1244,1065': 10, '1672,1515': 8, '1684,1492': 8, '1652,1518': 10, '1669,1449': 10, '1350,981': 9, '1305,1158': 10, '1002,664': 14, '1018,714': 10, '1067,598': 12, '769,1050': 11, '1149,786': 15, '1270,963': 15, '1433,933': 12.5, '1400,1016': 9.5, '1166,1334': 11, '951,1358': 9, '876,579': 16, '1522,1368': 9, '1278,1029': 9, '1370,1085': 9, '877,1485': 20 };
const nodes = new Map();
const links = new Map();

function author(text, dx, dy) {
  const [, x, y, color] = text.match(/^(-?\d+),(-?\d+)([a-z]?)$/);
  const key = (+x + dx) + ',' + (+y + dy);
  if (!nodes.has(key)) nodes.set(key, { x: +x + dx, y: +y + dy, color, degree: 0 });
  else if (color) nodes.get(key).color = color;
  return key;
}
function link(a, b) {
  const key = [a, b].sort().join('|');
  if (a === b || links.has(key)) return;
  links.set(key, [nodes.get(a), nodes.get(b)]);
  nodes.get(a).degree++;
  nodes.get(b).degree++;
}
function load(data, dx, dy) {
  for (const team of data.split(/[;\n]/)) {
    const star = team.startsWith('*');
    const keys = team.replace('*', '').trim().split(' ').map(t => author(t, dx, dy));
    keys.forEach((a, i) => { if (!star || i === 0) keys.slice(i + 1).forEach(b => link(a, b)); });
  }
}
load(northWest, 0, 0);
load(northEast, 1200, 0);
load(southWest, 0, 1140);
load(southEast, 1200, 1140);

let markup = '<g transform="translate(470 34) scale(.33333)"><g class="links">';
for (const [a, b] of links.values()) markup += `<line x1="${a.x}" y1="${a.y}" x2="${b.x}" y2="${b.y}"/>`;
markup += '</g><g class="nodes">';
for (const [key, n] of nodes) {
  const r = fixedRadii[key] || Math.min(20, 4.7 + n.degree * .47);
  markup += `<circle cx="${n.x}" cy="${n.y}" r="${r.toFixed(1)}" fill="${colors[n.color]}"/>`;
}
document.getElementById('network').insertAdjacentHTML('beforeend', markup + '</g></g>');
```
